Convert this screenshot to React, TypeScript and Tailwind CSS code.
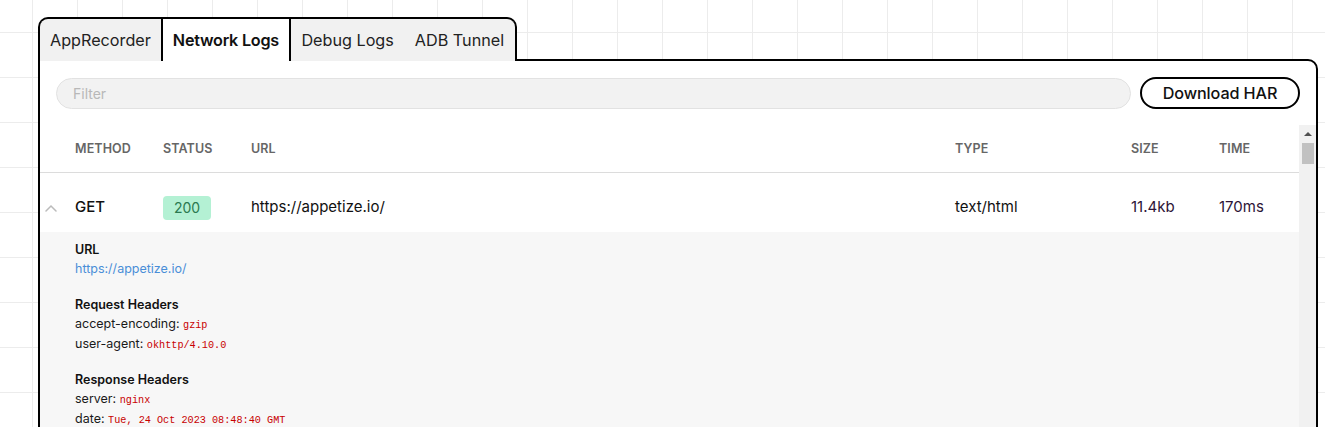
import React, { useState } from 'react';

interface Header {
  name: string;
  value: string;
}

const tabs = ['AppRecorder', 'Network Logs', 'Debug Logs', 'ADB Tunnel'];

const requestHeaders: Header[] = [
  { name: 'accept-encoding', value: 'gzip' },
  { name: 'user-agent', value: 'okhttp/4.10.0' },
];

const responseHeaders: Header[] = [
  { name: 'server', value: 'nginx' },
  { name: 'date', value: 'Tue, 24 Oct 2023 08:48:40 GMT' },
];

const cols = 'grid grid-cols-[35px_88px_88px_704px_176px_88px_1fr] items-center';

const HeaderList: React.FC<{ title: string; items: Header[] }> = ({ title, items }) => (
  <div className="mt-4">
    <div className="text-[12.5px] font-semibold leading-[19px] text-[#111]">{title}</div>
    {items.map(h => (
      <div key={h.name} className="h-5 text-[12.5px] leading-[20px] text-[#1a1a1a]">
        {h.name}:{' '}
        <span className="font-['Liberation_Mono',monospace] text-[10.2px] leading-none text-[#c80000]">{h.value}</span>
      </div>
    ))}
  </div>
);

export default function App() {
  const [active, setActive] = useState('Network Logs');
  const [open, setOpen] = useState(true);

  return (
    <div className="h-[427px] overflow-hidden bg-white bg-[image:linear-gradient(to_right,#ececec_1px,transparent_1px),linear-gradient(to_bottom,#ececec_1px,transparent_1px)] bg-[size:45px_45px] bg-[position:32px_32px] pl-[38px] pt-[17px] font-['Inter',sans-serif] text-[#111]">
      {/* Tabs */}
      <div className="relative z-10 -mb-[2px] flex w-fit overflow-hidden rounded-t-[10px] border-2 border-b-0 border-black bg-[#f1f1f1]">
        {tabs.map((t, i) => (
          <button
            key={t}
            onClick={() => setActive(t)}
            className={`flex h-[42px] items-center text-[16.2px] ${i < 2 ? 'px-[10px]' : 'px-[10.5px]'} ${
              active === t ? 'border-x-2 border-black bg-white font-semibold tracking-[-0.25px]' : 'text-[#222]'
            }`}
          >
            {t}
          </button>
        ))}
      </div>

      {/* Panel */}
      <div className="h-[400px] w-[1280px] rounded-tr-[10px] border-2 border-black bg-white">
        <div className="flex items-center gap-[9px] px-4 pt-4">
          <input
            placeholder="Filter"
            className="h-[31px] flex-1 rounded-full border border-[#e2e2e2] bg-[#f2f2f2] px-4 text-[14px] outline-none placeholder:text-[#b8b8b8]"
          />
          <button className="h-8 w-[160px] rounded-full border-2 border-black text-[16.2px] font-medium tracking-[-0.1px]">
            Download HAR
          </button>
        </div>

        <div className="mt-4 flex h-[400px]">
          <div className="flex-1">
            {/* Column header */}
            <div className={`${cols} h-[48px] border-b border-[#dcdcdc] pt-[2px] text-[12.5px] font-semibold tracking-[0.1px] text-[#666]`}>
              <span />
              <span>METHOD</span>
              <span>STATUS</span>
              <span>URL</span>
              <span>TYPE</span>
              <span>SIZE</span>
              <span>TIME</span>
            </div>

            {/* Request row */}
            <div className={`${cols} h-[59px] cursor-pointer pt-[10px] text-[15px]`} onClick={() => setOpen(!open)}>
              <span className="pl-[5px]">
                <svg width="12" height="8" viewBox="0 0 12 8" fill="none">
                  <polyline
                    points={open ? '1,7 6,2 11,7' : '1,2 6,7 11,2'}
                    stroke="#bbbbbb"
                    strokeWidth="1.5"
                    strokeLinecap="round"
                  />
                </svg>
              </span>
              <span className="font-medium">GET</span>
              <span>
                <span className="inline-flex h-6 w-12 items-center justify-center rounded-[4px] bg-[#b4f1d4] text-[14px] text-[#2b7a50]">
                  200
                </span>
              </span>
              <span>https://appetize.io/</span>
              <span>text/html</span>
              <span className="text-[#2d1436]">11.4kb</span>
              <span className="text-[#2d1436]">170ms</span>
            </div>

            {open && (
              <div className="h-[300px] bg-[#f7f7f7] pl-[35px] pt-[8px]">
                <div className="text-[12.5px] font-semibold leading-[19px] text-[#111]">URL</div>
                <div className="h-5 text-[12.5px] leading-[20px] text-[#4a8ed8]">https://appetize.io/</div>
                <HeaderList title="Request Headers" items={requestHeaders} />
                <HeaderList title="Response Headers" items={responseHeaders} />
              </div>
            )}
          </div>

          {/* Scrollbar */}
          <div className="flex w-[17px] flex-col items-center bg-[#f1f1f1]">
            <div className="flex h-[18px] items-center justify-center">
              <div className="h-0 w-0 border-x-[4px] border-b-[4px] border-x-transparent border-b-[#505050]" />
            </div>
            <div className="h-[21px] w-[12px] bg-[#c1c1c1]" />
          </div>
        </div>
      </div>
    </div>
  );
}
